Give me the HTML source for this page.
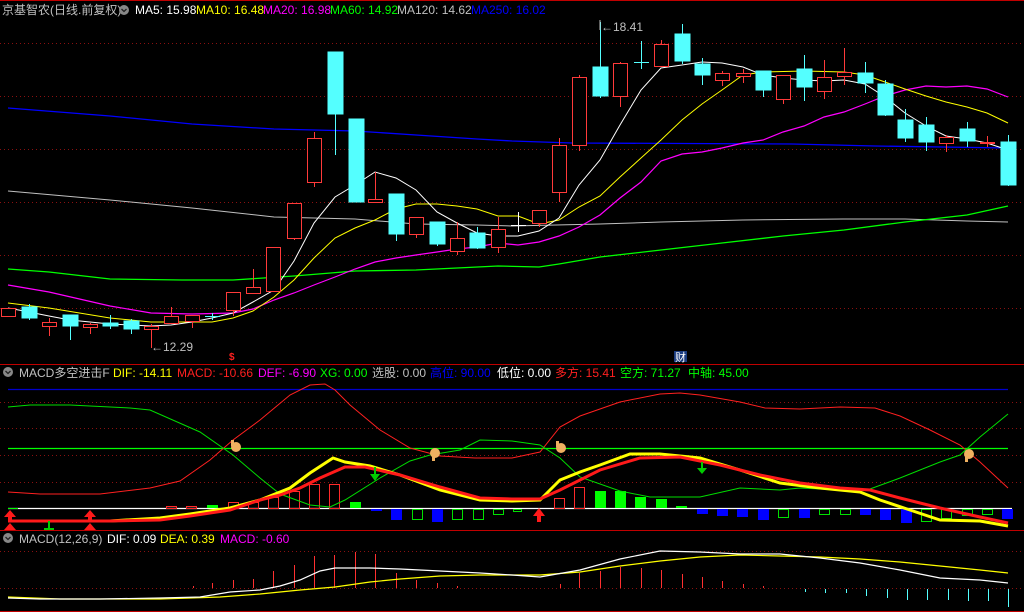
<!DOCTYPE html>
<html><head><meta charset="utf-8"><style>
html,body{margin:0;padding:0;background:#000;width:1024px;height:612px;overflow:hidden}
svg{display:block}
text{font-family:"Liberation Sans","Noto Sans CJK SC",sans-serif;font-size:12px}
</style></head><body>
<svg width="1024" height="612" viewBox="0 0 1024 612" xmlns="http://www.w3.org/2000/svg">
<rect width="1024" height="612" fill="#000"/>
<line x1="0" y1="0.5" x2="1024" y2="0.5" stroke="#c00000"/>
<!-- grid -->
<g stroke="#8a1010" stroke-dasharray="1,3" stroke-width="1">
<line x1="0" y1="43.5" x2="1024" y2="43.5"/><line x1="0" y1="96.5" x2="1024" y2="96.5"/>
<line x1="0" y1="149.5" x2="1024" y2="149.5"/><line x1="0" y1="202.5" x2="1024" y2="202.5"/>
<line x1="0" y1="255.5" x2="1024" y2="255.5"/><line x1="0" y1="308.5" x2="1024" y2="308.5"/>
<line x1="0" y1="402.5" x2="1024" y2="402.5"/><line x1="0" y1="428.5" x2="1024" y2="428.5"/>
<line x1="0" y1="455.5" x2="1024" y2="455.5"/><line x1="0" y1="482.5" x2="1024" y2="482.5"/>
<line x1="0" y1="551.5" x2="1024" y2="551.5"/><line x1="0" y1="588.5" x2="1024" y2="588.5"/>
</g>
<line x1="0" y1="364.5" x2="1024" y2="364.5" stroke="#c00000"/>
<line x1="0" y1="530.5" x2="1024" y2="530.5" stroke="#c00000"/>
<line x1="0" y1="611.5" x2="1024" y2="611.5" stroke="#c00000"/>

<!-- MA lines -->
<g fill="none" stroke-width="1">
<polyline stroke="#0000ff" stroke-width="1.3" points="8,108 110,116 192,124 274,129 355,131 416,135 477,139 512,141 572,143 792,144 875,146 1008,148"/>
<polyline stroke="#c0c0c0" points="8,191 110,200 192,208 274,217 355,219 416,224 477,225 512,226 600,224 661,222 743,220 843,219 905,219 967,221 1008,222"/>
<polyline stroke="#00ff00" stroke-width="1.3" points="8,269 49,272 110,279 182,280 233,280 294,276 355,271 416,270 498,266 539,267 559,264 600,257 661,250 722,243 783,236 844,230 905,222 967,215 1008,206"/>
<polyline stroke="#ff00ff" stroke-width="1.2" points="8,285 49,292 110,306 151,313 192,314 233,313 253,309 274,300 294,293 314,285 335,277 355,269 375,262 396,258 416,255 437,252 457,249 477,247 498,243 518,245 539,242 559,236 579,227 600,215 620,198 641,182 661,161 682,154 702,152 722,148 743,143 763,140 783,132 804,126 824,117 844,112 865,104 885,96 905,90 926,86 946,87 967,86 987,89 1008,97"/>
<polyline stroke="#ffff00" points="8,303 49,308 110,318 151,322 212,322 233,318 253,311 274,297 294,280 314,258 335,238 355,228 375,220 396,209 416,204 437,204 457,206 477,209 498,216 518,216 539,224 559,220 579,207 600,196 620,177 641,158 661,140 682,120 702,104 722,90 743,75 763,72 804,71 844,72 865,75 885,82 905,89 926,96 946,102 967,107 987,113 1008,123"/>
<polyline stroke="#ffffff" points="8,308 29,312 49,316 70,320 90,322 110,324 131,325 151,326 171,325 192,322 212,318 233,313 253,302 274,290 294,261 314,223 335,197 355,185 375,172 396,178 416,190 437,212 457,223 477,233 498,236 518,236 539,231 559,218 579,185 600,160 620,125 641,90 661,68 682,65 702,62 722,63 743,67 763,75 783,78 804,80 824,81 844,80 865,84 885,97 905,113 926,126 946,136 967,139 987,143 1008,150"/>
</g>

<!-- candles -->
<g stroke="#ff3a3a" fill="#000" stroke-width="1">
<rect x="1.5" y="308.5" width="14" height="8"/>
<line x1="49.5" y1="318" x2="49.5" y2="336"/><rect x="42.5" y="322.5" width="14" height="4"/>
<line x1="90.5" y1="323" x2="90.5" y2="334"/><rect x="83.5" y="324.5" width="14" height="3"/>
<line x1="151.5" y1="324" x2="151.5" y2="348"/><rect x="144.5" y="326.5" width="14" height="3"/>
<line x1="171.5" y1="307" x2="171.5" y2="324"/><rect x="164.5" y="316.5" width="14" height="7"/>
<line x1="192.5" y1="315" x2="192.5" y2="328"/><rect x="185.5" y="315.5" width="14" height="6"/>
<line x1="233.5" y1="292" x2="233.5" y2="316"/><rect x="226.5" y="292.5" width="14" height="18"/>
<line x1="253.5" y1="269" x2="253.5" y2="293"/><rect x="246.5" y="287.5" width="14" height="6"/>
<rect x="266.5" y="247.5" width="14" height="44"/>
<line x1="294.5" y1="203" x2="294.5" y2="240"/><rect x="287.5" y="203.5" width="14" height="35"/>
<line x1="314.5" y1="132" x2="314.5" y2="187"/><rect x="307.5" y="138.5" width="14" height="44"/>
<line x1="375.5" y1="172" x2="375.5" y2="202"/><rect x="368.5" y="199.5" width="14" height="3"/>
<line x1="416.5" y1="217" x2="416.5" y2="238"/><rect x="409.5" y="217.5" width="14" height="17"/>
<line x1="457.5" y1="222" x2="457.5" y2="255"/><rect x="450.5" y="238.5" width="14" height="13"/>
<line x1="498.5" y1="217" x2="498.5" y2="253"/><rect x="491.5" y="229.5" width="14" height="18"/>
<line x1="539.5" y1="210" x2="539.5" y2="227"/><rect x="532.5" y="210.5" width="14" height="13"/>
<line x1="559.5" y1="138" x2="559.5" y2="202"/><rect x="552.5" y="145.5" width="14" height="47"/>
<line x1="579.5" y1="75" x2="579.5" y2="151"/><rect x="572.5" y="77.5" width="14" height="68"/>
<line x1="620.5" y1="62" x2="620.5" y2="107"/><rect x="613.5" y="63.5" width="14" height="33"/>
<line x1="661.5" y1="40" x2="661.5" y2="66"/><rect x="654.5" y="44.5" width="14" height="22"/>
<line x1="722.5" y1="71" x2="722.5" y2="86"/><rect x="715.5" y="73.5" width="14" height="7"/>
<line x1="743.5" y1="69" x2="743.5" y2="83"/><rect x="736.5" y="73.5" width="14" height="3"/>
<line x1="783.5" y1="75" x2="783.5" y2="104"/><rect x="776.5" y="75.5" width="14" height="24"/>
<line x1="824.5" y1="60" x2="824.5" y2="99"/><rect x="817.5" y="77.5" width="14" height="14"/>
<line x1="844.5" y1="48" x2="844.5" y2="85"/><rect x="837.5" y="72.5" width="14" height="4"/>
<line x1="946.5" y1="135" x2="946.5" y2="152"/><rect x="939.5" y="137.5" width="14" height="6"/>
<line x1="987.5" y1="136" x2="987.5" y2="147"/><line x1="980" y1="143" x2="995" y2="143" stroke-width="2"/>
</g>
<g stroke="#54ffff" fill="#54ffff" stroke-width="1">
<line x1="29.5" y1="304" x2="29.5" y2="320"/><rect x="22" y="307" width="15" height="11"/>
<line x1="70.5" y1="315" x2="70.5" y2="340"/><rect x="63" y="315" width="15" height="11"/>
<line x1="110.5" y1="315" x2="110.5" y2="329"/><rect x="103" y="323" width="15" height="3"/>
<line x1="131.5" y1="319" x2="131.5" y2="334"/><rect x="124" y="321" width="15" height="8"/>
<line x1="212.5" y1="313" x2="212.5" y2="320"/><line x1="205" y1="316.5" x2="220" y2="316.5"/>
<line x1="335.5" y1="52" x2="335.5" y2="155"/><rect x="328" y="52" width="15" height="62"/>
<rect x="349" y="119" width="15" height="83"/>
<line x1="396.5" y1="194" x2="396.5" y2="241"/><rect x="389" y="194" width="15" height="40"/>
<line x1="437.5" y1="222" x2="437.5" y2="246"/><rect x="430" y="222" width="15" height="22"/>
<line x1="477.5" y1="227" x2="477.5" y2="249"/><rect x="470" y="233" width="15" height="15"/>
<line x1="518.5" y1="212" x2="518.5" y2="232" stroke="#fff"/><line x1="511" y1="225.5" x2="526" y2="225.5" stroke="#fff"/>
<line x1="600.5" y1="22" x2="600.5" y2="98"/><rect x="593" y="67" width="15" height="29"/>
<line x1="641.5" y1="41" x2="641.5" y2="69"/><line x1="634" y1="62.5" x2="649" y2="62.5"/>
<line x1="682.5" y1="24" x2="682.5" y2="64"/><rect x="675" y="34" width="15" height="27"/>
<line x1="702.5" y1="58" x2="702.5" y2="85"/><rect x="695" y="64" width="15" height="11"/>
<line x1="763.5" y1="71" x2="763.5" y2="97"/><rect x="756" y="71" width="15" height="19"/>
<line x1="804.5" y1="55" x2="804.5" y2="101"/><rect x="797" y="69" width="15" height="18"/>
<line x1="865.5" y1="62" x2="865.5" y2="93"/><rect x="858" y="73" width="15" height="10"/>
<line x1="885.5" y1="80" x2="885.5" y2="116"/><rect x="878" y="84" width="15" height="31"/>
<line x1="905.5" y1="109" x2="905.5" y2="142"/><rect x="898" y="120" width="15" height="18"/>
<line x1="926.5" y1="117" x2="926.5" y2="151"/><rect x="919" y="125" width="15" height="17"/>
<line x1="967.5" y1="122" x2="967.5" y2="147"/><rect x="960" y="129" width="15" height="12"/>
<line x1="1008.5" y1="135" x2="1008.5" y2="186"/><rect x="1001" y="142" width="15" height="43"/>
</g>
<text x="601" y="31" fill="#c0c0c0">←18.41</text>
<line x1="600" y1="20" x2="600" y2="30" stroke="#c0c0c0"/>
<text x="151" y="351" fill="#c0c0c0">←12.29</text>
<text x="229" y="360" fill="#ff2020" font-size="10" style="font-size:10px;font-weight:bold">$</text>
<rect x="674" y="351" width="13" height="11" fill="#1a3c80"/>
<text x="675" y="361" fill="#fff" style="font-size:11px">财</text>

<!-- header 1 -->
<text x="2" y="14" fill="#c0c0c0">京基智农(日线.前复权)</text>
<circle cx="124" cy="10" r="5" fill="#888"/><path d="M121.5 9 L124 11.5 L126.5 9" stroke="#222" fill="none" stroke-width="1.3"/>
<text x="135" y="14" fill="#fff">MA5: 15.98</text>
<text x="196" y="14" fill="#ffff00">MA10: 16.48</text>
<text x="263" y="14" fill="#ff00ff">MA20: 16.98</text>
<text x="330" y="14" fill="#00ff00">MA60: 14.92</text>
<text x="397" y="14" fill="#c0c0c0">MA120: 14.62</text>
<text x="471" y="14" fill="#0000ff">MA250: 16.02</text>

<!-- header 2 -->
<circle cx="8" cy="372" r="5" fill="#888"/><path d="M5.5 371 L8 373.5 L10.5 371" stroke="#222" fill="none" stroke-width="1.3"/>
<text x="19" y="377" fill="#c0c0c0">MACD多空进击F</text>
<text x="113" y="377" fill="#ffff00">DIF: -14.11</text>
<text x="177" y="377" fill="#ff2020">MACD: -10.66</text>
<text x="258" y="377" fill="#ff00ff">DEF: -6.90</text>
<text x="320" y="377" fill="#00ff00">XG: 0.00</text>
<text x="372" y="377" fill="#c0c0c0">选股: 0.00</text>
<text x="430" y="377" fill="#0000ff">高位: 90.00</text>
<text x="497" y="377" fill="#fff">低位: 0.00</text>
<text x="555" y="377" fill="#ff2020">多方: 15.41</text>
<text x="620" y="377" fill="#00ff00">空方: 71.27</text>
<text x="688" y="377" fill="#00ff00">中轴: 45.00</text>

<!-- panel 2 -->
<line x1="8" y1="389.5" x2="1008" y2="389.5" stroke="#0000cc" stroke-width="1.2"/>
<line x1="8" y1="448.5" x2="1008" y2="448.5" stroke="#00ff00" stroke-width="1.2"/>
<line x1="8" y1="508.5" x2="1012" y2="508.5" stroke="#fff" stroke-width="1.3"/>
<g stroke="#ff2a2a" fill="none">
<rect x="166.5" y="506.5" width="10" height="2"/><rect x="186.5" y="506.5" width="10" height="2"/>
<rect x="228.5" y="502.5" width="10" height="6"/><rect x="248.5" y="502.5" width="10" height="6"/>
<rect x="268.5" y="497.5" width="10" height="11"/><rect x="289.5" y="491.5" width="10" height="17"/>
<rect x="309.5" y="484.5" width="10" height="24"/><rect x="329.5" y="484.5" width="10" height="24"/>
<rect x="554.5" y="498.5" width="10" height="10"/><rect x="574.5" y="487.5" width="10" height="21"/>
</g>
<g fill="#00ff00">
<rect x="207" y="505" width="11" height="3"/><rect x="350" y="502" width="11" height="6"/>
<rect x="595" y="491" width="11" height="17"/><rect x="615" y="491" width="11" height="17"/>
<rect x="635" y="497" width="11" height="11"/><rect x="656" y="499" width="11" height="9"/>
<rect x="676" y="506" width="11" height="2"/><rect x="8" y="508" width="10" height="1"/>
</g>
<g fill="#0000ff">
<rect x="371" y="509" width="11" height="2"/><rect x="391" y="509" width="11" height="11"/>
<rect x="432" y="509" width="11" height="13"/><rect x="697" y="509" width="11" height="5"/>
<rect x="717" y="509" width="11" height="7"/><rect x="737" y="509" width="11" height="8"/>
<rect x="758" y="509" width="11" height="11"/><rect x="799" y="509" width="11" height="9"/>
<rect x="860" y="509" width="11" height="6"/><rect x="880" y="509" width="11" height="11"/>
<rect x="901" y="509" width="11" height="14"/><rect x="1002" y="509" width="11" height="10"/>
</g>
<g stroke="#00e000" fill="none">
<rect x="412.5" y="509.5" width="10" height="10"/><rect x="452.5" y="509.5" width="10" height="10"/>
<rect x="473.5" y="509.5" width="10" height="10"/><rect x="493.5" y="509.5" width="10" height="5"/>
<rect x="513.5" y="509.5" width="8" height="2"/><rect x="778.5" y="509.5" width="10" height="8"/>
<rect x="819.5" y="509.5" width="10" height="5"/><rect x="840.5" y="509.5" width="10" height="5"/>
<rect x="921.5" y="509.5" width="10" height="12"/><rect x="941.5" y="509.5" width="10" height="9"/>
<rect x="962.5" y="509.5" width="10" height="6"/><rect x="982.5" y="509.5" width="10" height="5"/>
</g>
<g fill="none">
<polyline stroke="#ff2020" points="8,492 40,494 100,494 150,488 180,481 210,460 233,440 260,420 290,395 310,385 325,384 335,390 350,405 380,430 410,448 440,456 475,458 512,458 540,452 560,427 580,416 620,402 660,394 680,393 700,395 740,402 765,408 800,409 840,407 875,408 900,416 930,430 960,445 980,462 1008,488"/>
<polyline stroke="#00dd00" points="8,407 30,405 70,405 90,406 130,408 150,410 200,432 233,455 260,478 280,494 310,505 330,507 345,500 380,478 410,461 430,455 460,450 480,440 512,441 540,445 560,458 580,477 620,491 650,497 700,497 740,488 780,490 800,488 840,490 870,489 900,478 940,462 960,455 980,437 1008,414"/>
<polyline stroke="#ffff00" stroke-width="3" points="110,521 160,518 190,514 230,508 260,500 290,488 310,473 333,458 345,462 370,466 400,475 440,490 480,500 512,501 540,500 560,480 580,472 600,465 630,454 660,454 700,458 740,470 780,483 820,488 860,492 880,500 910,510 940,520 980,521 1008,526"/>
<polyline stroke="#ff1a1a" stroke-width="3" points="8,521 110,521 160,520 190,516 230,510 260,500 280,495 300,488 320,478 345,467 365,467 400,475 440,487 480,498 512,499 540,499 560,490 600,470 640,458 680,457 720,465 760,475 800,483 840,488 870,490 900,498 940,508 980,517 1008,523"/>
</g>
<g fill="#ff1a1a">
<path d="M4 517 L10 510 L16 517 L12 517 L12 521 L8 521 L8 517Z"/><path d="M4 530 L10 523 L16 530Z"/>
<path d="M84 517 L90 510 L96 517 L92 517 L92 521 L88 521 L88 517Z"/><path d="M84 530 L90 523 L96 530Z"/>
<path d="M533 516 L539 508 L545 516 L541 516 L541 522 L537 522 L537 516Z"/>
</g>
<path d="M44 529 L54 529 M49 521 L49 529" stroke="#00cc00" stroke-width="2"/>
<g fill="#00cc00">
<path d="M374 467 L376 467 L376 474 L380 474 L375 481 L370 474 L374 474Z"/>
<path d="M701 462 L703 462 L703 468 L707 468 L702 474 L697 468 L701 468Z"/>
</g>
<g fill="#f0b060">
<circle cx="236" cy="447" r="5"/><rect x="231" y="440" width="3" height="6"/>
<circle cx="435" cy="453" r="5"/><rect x="432" y="455" width="3" height="6"/>
<circle cx="561" cy="448" r="5"/><rect x="556" y="441" width="3" height="6"/>
<circle cx="969" cy="454" r="5"/><rect x="965" y="456" width="3" height="6"/>
</g>

<!-- header 3 -->
<circle cx="8" cy="538" r="5" fill="#888"/><path d="M5.5 537 L8 539.5 L10.5 537" stroke="#222" fill="none" stroke-width="1.3"/>
<text x="19" y="543" fill="#c0c0c0">MACD(12,26,9)</text>
<text x="107" y="543" fill="#fff">DIF: 0.09</text>
<text x="160" y="543" fill="#ffff00">DEA: 0.39</text>
<text x="220" y="543" fill="#ff00ff">MACD: -0.60</text>

<!-- panel 3 -->
<g stroke="#ff3030" stroke-width="1">
<line x1="193.5" y1="588" x2="193.5" y2="586"/><line x1="212.5" y1="588" x2="212.5" y2="583"/>
<line x1="233.5" y1="588" x2="233.5" y2="580"/><line x1="253.5" y1="588" x2="253.5" y2="579"/>
<line x1="273.5" y1="588" x2="273.5" y2="571"/><line x1="294.5" y1="588" x2="294.5" y2="565"/>
<line x1="314.5" y1="588" x2="314.5" y2="556"/><line x1="334.5" y1="588" x2="334.5" y2="555"/>
<line x1="355.5" y1="588" x2="355.5" y2="552"/><line x1="375.5" y1="588" x2="375.5" y2="554"/>
<line x1="396.5" y1="588" x2="396.5" y2="573"/><line x1="416.5" y1="588" x2="416.5" y2="580"/>
<line x1="437.5" y1="588" x2="437.5" y2="583"/><line x1="457.5" y1="588" x2="457.5" y2="586"/>
<line x1="560.5" y1="588" x2="560.5" y2="584"/><line x1="579.5" y1="588" x2="579.5" y2="573"/>
<line x1="600.5" y1="588" x2="600.5" y2="571"/><line x1="620.5" y1="588" x2="620.5" y2="567"/>
<line x1="641.5" y1="588" x2="641.5" y2="568"/><line x1="661.5" y1="588" x2="661.5" y2="570"/>
<line x1="682.5" y1="588" x2="682.5" y2="574"/><line x1="702.5" y1="588" x2="702.5" y2="577"/>
<line x1="722.5" y1="588" x2="722.5" y2="581"/><line x1="743.5" y1="588" x2="743.5" y2="584"/>
<line x1="763.5" y1="588" x2="763.5" y2="586"/>
</g>
<g stroke="#54ffff" stroke-width="1">
<line x1="805.5" y1="589" x2="805.5" y2="592"/><line x1="825.5" y1="589" x2="825.5" y2="593"/>
<line x1="846.5" y1="589" x2="846.5" y2="593"/><line x1="866.5" y1="589" x2="866.5" y2="596"/>
<line x1="887.5" y1="589" x2="887.5" y2="598"/><line x1="907.5" y1="589" x2="907.5" y2="600"/>
<line x1="927.5" y1="589" x2="927.5" y2="600"/><line x1="948.5" y1="589" x2="948.5" y2="600"/>
<line x1="968.5" y1="589" x2="968.5" y2="601"/><line x1="988.5" y1="589" x2="988.5" y2="601"/>
<line x1="1008.5" y1="589" x2="1008.5" y2="607"/>
</g>
<g fill="none" stroke-width="1.2">
<polyline stroke="#ffff00" points="8,597 60,599 160,599 220,597 260,594 300,590 335,587 370,582 400,579 440,576 480,575 512,575 540,575 580,572 620,566 660,561 700,557 740,555 780,556 820,557 860,559 900,562 940,566 980,570 1008,573"/>
<polyline stroke="#ffffff" points="8,598 40,599 100,599 160,598 200,597 230,592 260,590 280,586 300,580 320,571 335,568 370,568 400,569 440,571 480,573 512,575 540,577 580,570 620,559 660,551 700,552 740,554 780,554 820,558 860,563 900,570 940,578 980,580 1008,583"/>
</g>
</svg>
</body></html>
